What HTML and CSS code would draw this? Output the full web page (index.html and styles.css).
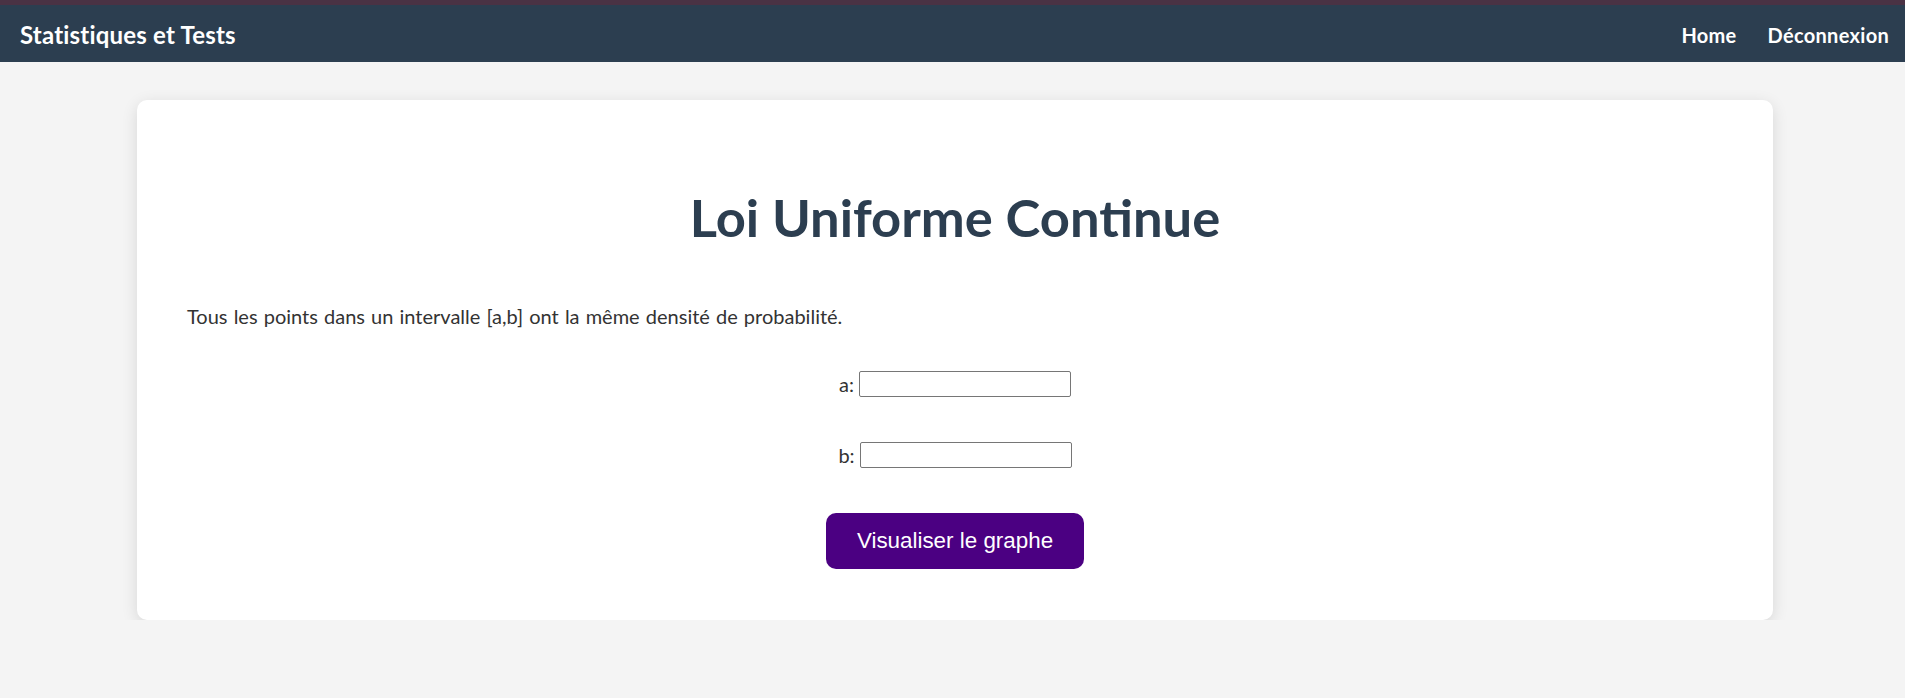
FILE: index.html
```html
<!DOCTYPE html>
<html lang="fr">
<head>
<meta charset="utf-8">
<title>Loi Uniforme Continue</title>
<link rel="stylesheet" href="styles.css">
</head>
<body>
<div class="topbar"></div>
<nav class="navbar">
  <div class="brand">Statistiques et Tests</div>
  <div class="links">
    <a href="#" class="link">Home</a>
    <a href="#" class="link">Déconnexion</a>
  </div>
</nav>
<main class="card">
  <h1 class="title">Loi Uniforme Continue</h1>
  <p class="desc">Tous les points dans un intervalle [a,b] ont la même densité de probabilité.</p>
  <form class="form">
    <div class="field"><label class="label" for="a">a:</label><input class="input" id="a" type="text"></div>
    <div class="field"><label class="label" for="b">b:</label><input class="input" id="b" type="text"></div>
    <button type="button" class="btn">Visualiser le graphe</button>
  </form>
</main>
</body>
</html>
```
FILE: styles.css
```css
* { box-sizing: border-box; }
body {
  margin: 0;
  background: #f4f4f4;
  font-family: "Lato", "Open Sans", sans-serif;
  color: #333;
}
.topbar {
  height: 5px;
  background: #4a3244;
}
.navbar {
  height: 57px;
  background: #2c3e50;
  display: flex;
  align-items: center;
  justify-content: space-between;
  padding: 3px 16px 0 20px;
  color: #fff;
}
.brand {
  font-weight: 700;
  font-size: 24px;
  line-height: 28px;
  letter-spacing: 0.2px;
}
.links {
  display: flex;
  gap: 31px;
}
.link {
  color: #fff;
  text-decoration: none;
  font-weight: 700;
  font-size: 20px;
  line-height: 24px;
  letter-spacing: 0.3px;
}
.card {
  display: block;
  margin: 38px 132px 0 137px;
  background: #fff;
  border-radius: 10px;
  box-shadow: 0 4px 16px rgba(0, 0, 0, 0.12);
  padding: 50px 50px 51px;
}
.title {
  margin: 36px 0 0;
  text-align: center;
  font-size: 52.5px;
  line-height: 62px;
  font-weight: 700;
  color: #2c3e50;
}
.desc {
  margin: 54px 0 0;
  font-size: 20px;
  line-height: 28px;
  word-spacing: 1px;
  color: #333;
}
.form {
  margin-top: 41px;
  display: flex;
  flex-direction: column;
  align-items: center;
  gap: 45px;
}
.field {
  display: flex;
  align-items: center;
  gap: 5px;
  font-size: 20px;
  line-height: 24px;
}
.label {
  color: #333;
}
.input {
  width: 212px;
  height: 26px;
  border: 1px solid #767676;
  border-radius: 2px;
  background: #fff;
  padding: 1px 2px;
  font-size: 16px;
}
.btn {
  margin-top: 0;
  background: #4b0082;
  color: #fff;
  border: none;
  border-radius: 10px;
  padding: 15px 31px;
  font-family: "Liberation Sans", Arial, sans-serif;
  font-size: 22.4px;
  line-height: 26px;
  cursor: pointer;
}
```
